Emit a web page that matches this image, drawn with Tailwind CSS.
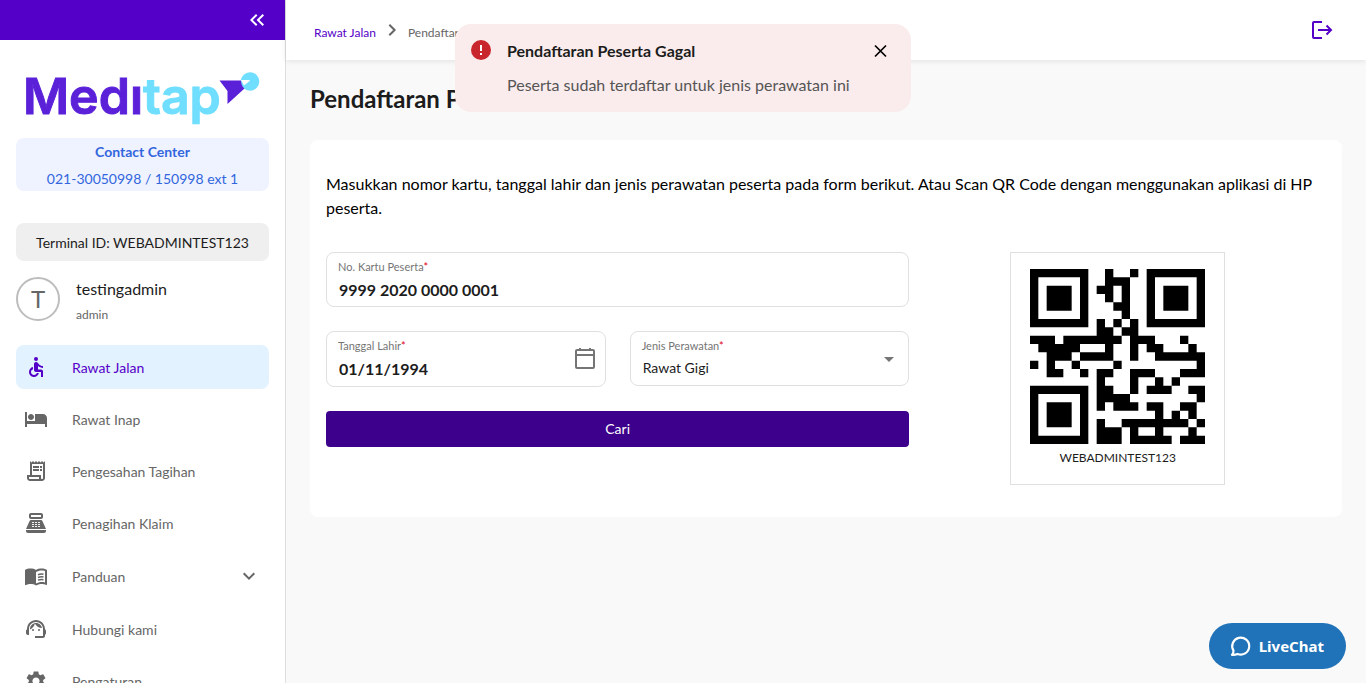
<!DOCTYPE html>
<html lang="id">
<head>
<meta charset="utf-8">
<meta name="viewport" content="width=device-width, initial-scale=1">
<title>Meditap - Pendaftaran Peserta</title>
<script src="https://cdn.jsdelivr.net/npm/@tailwindcss/browser@4"></script>
</head>
<body class="flex h-screen overflow-hidden bg-[#f9f9f9] font-['Lato',sans-serif] text-[#1c1c1c]">

<aside class="flex w-[286px] shrink-0 flex-col overflow-hidden border-r border-[#dedede] bg-white">
  <div class="flex h-10 shrink-0 items-center justify-end bg-[#5500c8] pr-4">
    <button type="button" aria-label="Tutup menu" class="text-white">
      <svg class="size-6" viewBox="0 0 24 24" fill="currentColor"><path d="M17.59 18 19 16.59 14.42 12 19 7.41 17.59 6l-6 6z"/><path d="m11 18 1.41-1.41L7.83 12l4.58-4.59L11 6l-6 6z"/></svg>
    </button>
  </div>

  <div class="flex flex-col px-4 pt-6">
    <svg class="h-[74px] w-full" viewBox="0 0 253 74" role="img" aria-label="Meditap">
      <text x="7" y="50" font-family="Inter, sans-serif" font-weight="600" font-size="50" fill="#5b21d9" stroke="#5b21d9">Medı<tspan fill="#70defe" stroke="#70defe">tap</tspan></text>
      <circle cx="234" cy="17.500" r="9.300" fill="#70defe"/>
      <path d="M203.500 16.500h21.500q0 5 3.500 8L211.500 40V27z" fill="#5b21d9"/>
      <path d="M225 16h8q2 .5 0 1.500l-5 4z" fill="#fff"/>
    </svg>

    <div class="flex flex-col items-center rounded-lg bg-[#eef3ff] pt-0.5 text-sm leading-6 text-[#3366dd]">
      <strong class="font-bold">Contact Center</strong>
      <span class="pt-[3px]">021-30050998 / 150998 ext 1</span>
    </div>

    <div class="mt-8 flex h-[38px] items-center justify-center rounded-lg bg-[#efefef] pt-0.5 text-sm">Terminal ID: WEBADMINTEST123</div>

    <div class="mt-4 flex gap-4">
      <div class="flex size-11 shrink-0 items-center justify-center rounded-full border-2 border-[#bdbdbd] text-2xl text-[#666]">T</div>
      <div class="flex flex-col">
        <span class="text-base leading-6">testingadmin</span>
        <span class="pt-1 text-xs leading-5 text-[#666]">admin</span>
      </div>
    </div>

    <nav class="mt-5 flex flex-col gap-2 text-sm text-[#666]" aria-label="Menu utama">
      <a href="#" aria-current="page" class="flex h-11 items-center gap-6 rounded-lg bg-[#e3f2ff] px-2 text-[#5500c8]">
        <svg class="size-6" viewBox="0 0 24 24" fill="currentColor"><circle cx="12" cy="4" r="2"/><path d="M19 13v-2c-1.540.020-3.090-.75-4.070-1.830l-1.290-1.430c-.17-.19-.38-.34-.61-.45-.01 0-.01-.01-.02-.01H13c-.35-.2-.75-.3-1.190-.26C10.760 7.110 10 8.040 10 9.090V15c0 1.100.9 2 2 2h5v5h2v-5.500c0-1.100-.9-2-2-2h-3v-3.450c1.290 1.070 3.250 1.940 5 1.950m-6.170 5c-.41 1.160-1.520 2-2.830 2-1.660 0-3-1.340-3-3 0-1.310.84-2.410 2-2.830V12.100c-2.280.46-4 2.480-4 4.900 0 2.760 2.240 5 5 5 2.420 0 4.440-1.720 4.900-4z"/></svg>
        <span class="pt-0.5">Rawat Jalan</span>
      </a>
      <a href="#" class="flex h-11 items-center gap-6 px-2">
        <svg class="size-6" viewBox="0 0 24 24" fill="currentColor"><path d="M7 13c1.660 0 3-1.340 3-3S8.660 7 7 7s-3 1.340-3 3 1.340 3 3 3m12-6h-8v7H3V5H1v15h2v-3h18v3h2v-9c0-2.210-1.790-4-4-4"/></svg>
        <span class="pt-0.5">Rawat Inap</span>
      </a>
      <a href="#" class="flex h-11 items-center gap-6 px-2">
        <svg class="size-6" viewBox="0 0 24 24" fill="currentColor"><path d="M19.500 3.500 18 2l-1.500 1.500L15 2l-1.500 1.500L12 2l-1.500 1.500L9 2 7.500 3.500 6 2v14H3v3c0 1.660 1.340 3 3 3h12c1.660 0 3-1.340 3-3V2zM15 20H6c-.55 0-1-.45-1-1v-1h10zm4-1c0 .55-.45 1-1 1s-1-.45-1-1v-3H8V5h11z"/><path d="M9 7h6v2H9zm7 0h2v2h-2zm-7 3h6v2H9zm7 0h2v2h-2z"/></svg>
        <span class="pt-0.5">Pengesahan Tagihan</span>
      </a>
      <a href="#" class="flex h-11 items-center gap-6 px-2">
        <svg class="size-6" viewBox="0 0 24 24" fill="currentColor"><path fill-rule="evenodd" d="M17 2H7c-1.100 0-2 .9-2 2v2c0 1.100.9 2 2 2h10c1.100 0 2-.9 2-2V4c0-1.100-.9-2-2-2m0 4H7V4h10z"/><path d="M20 22H4c-1.100 0-2-.9-2-2v-1h20v1c0 1.100-.9 2-2 2m-1.470-11.810C18.210 9.470 17.490 9 16.700 9H7.300c-.79 0-1.510.47-1.830 1.190L2 18h20z"/><path d="M8.500 11.500h1m2 0h1m2 0h1m-7 2h1m2 0h1m2 0h1m-7 2h1m2 0h1m2 0h1" stroke="#fff" stroke-linecap="round"/></svg>
        <span class="pt-0.5">Penagihan Klaim</span>
      </a>
      <button type="button" aria-expanded="false" class="flex h-[46px] items-center gap-6 px-2 text-left">
        <svg class="size-6" viewBox="0 0 24 24" fill="currentColor"><path d="M21 5c-1.110-.35-2.330-.5-3.500-.5-1.950 0-4.050.4-5.500 1.500-1.450-1.100-3.550-1.500-5.500-1.500S2.450 4.900 1 6v14.650c0 .25.25.5.5.5.1 0 .15-.05.25-.05C3.100 20.450 5.050 20 6.500 20c1.950 0 4.050.4 5.500 1.500 1.350-.85 3.800-1.500 5.500-1.500 1.650 0 3.350.3 4.750 1.050.1.050.15.050.25.050.25 0 .5-.25.5-.5V6c-.6-.45-1.250-.75-2-1m0 13.500c-1.100-.35-2.300-.5-3.500-.5-1.700 0-4.150.65-5.500 1.500V8c1.350-.85 3.800-1.500 5.500-1.500 1.200 0 2.400.15 3.500.5z"/><path d="M14 10.800c1.600-.7 3.700-.9 5.500-.5m-5.500 3.150c1.600-.7 3.700-.9 5.500-.5m-5.500 3.200c1.600-.7 3.700-.9 5.500-.5" fill="none" stroke="currentColor" stroke-width="1.500"/></svg>
        <span class="flex-1 pt-0.5">Panduan</span>
        <svg class="size-6" viewBox="0 0 24 24" fill="none" stroke="currentColor" stroke-width="2"><path d="m6.700 9.300 5.300 5.300 5.300-5.300"/></svg>
      </button>
      <a href="#" class="flex h-11 items-center gap-6 px-2">
        <svg class="size-6" viewBox="0 0 24 24" fill="currentColor"><path d="M21 12.220C21 6.730 16.740 3 12 3c-4.690 0-9 3.650-9 9.280-.6.34-1 .98-1 1.720v2c0 1.100.9 2 2 2h1v-6.100c0-3.870 3.130-7 7-7s7 3.130 7 7V19h-8v2h8c1.100 0 2-.9 2-2v-1.220c.59-.31 1-.92 1-1.640v-2.300c0-.7-.41-1.310-1-1.620"/><circle cx="9" cy="13" r="1"/><circle cx="15" cy="13" r="1"/><path d="M18 11.030C17.520 8.180 15.040 6 12.050 6c-3.030 0-6.290 2.510-6.030 6.450 2.470-1.010 4.330-3.210 4.860-5.890 1.310 2.630 4 4.440 7.120 4.470"/></svg>
        <span class="pt-0.5">Hubungi kami</span>
      </a>
      <a href="#" class="flex h-11 items-center gap-6 px-2">
        <svg class="size-6" viewBox="0 0 24 24" fill="currentColor"><path d="M19.140 12.940c.04-.3.060-.61.060-.94 0-.32-.02-.64-.07-.94l2.030-1.580c.18-.14.23-.41.12-.61l-1.920-3.320c-.12-.22-.37-.29-.59-.22l-2.390.96c-.5-.38-1.030-.7-1.620-.94l-.36-2.540c-.04-.24-.24-.41-.48-.41h-3.840c-.24 0-.43.17-.47.41l-.36 2.540c-.59.24-1.130.57-1.620.94l-2.390-.96c-.22-.08-.47 0-.59.22L2.740 8.870c-.12.21-.08.47.12.61l2.030 1.580c-.05.3-.09.63-.09.94s.020.64.070.94l-2.030 1.580c-.18.14-.23.41-.12.61l1.920 3.320c.12.22.37.29.59.22l2.390-.96c.5.38 1.030.7 1.620.94l.36 2.540c.05.24.24.41.48.41h3.840c.24 0 .44-.17.47-.41l.36-2.540c.59-.24 1.130-.56 1.620-.94l2.390.96c.22.08.47 0 .59-.22l1.920-3.320c.12-.22.070-.47-.12-.61zM12 15.600c-1.980 0-3.600-1.620-3.600-3.600s1.620-3.600 3.600-3.600 3.600 1.620 3.600 3.600-1.620 3.600-3.600 3.600"/></svg>
        <span class="pt-0.5">Pengaturan</span>
      </a>
    </nav>
  </div>
</aside>

<div class="flex min-w-0 flex-1 flex-col">
  <header class="z-10 flex h-[60px] shrink-0 items-center justify-between bg-white pr-8 pl-7 shadow-[0_1px_6px_rgba(0,0,0,0.1)]">
    <nav aria-label="Breadcrumb" class="flex items-center gap-1 text-xs">
      <a href="#" class="pt-[5px] text-[#5500c8]">Rawat Jalan</a>
      <svg class="size-6 text-[#666]" viewBox="0 0 24 24" fill="none" stroke="currentColor" stroke-width="2"><path d="m9.300 6.700 5.300 5.300-5.300 5.300"/></svg>
      <span class="pt-[5px] text-[#666]">Pendaftaran Peserta</span>
    </nav>
    <button type="button" aria-label="Keluar" class="text-[#5500c8]">
      <svg class="size-6" viewBox="0 0 24 24" fill="none" stroke="currentColor" stroke-width="2"><path d="M12 4H4q-1 0-1 1v14q0 1 1 1h8M8 12h13M16.500 7.500 21 12l-4.500 4.500"/></svg>
    </button>
  </header>

  <main class="flex flex-col gap-[26px] px-6 pt-[23px] pb-6">
    <h1 class="text-2xl leading-[31px] font-bold">Pendaftaran Peserta</h1>

    <section class="flex flex-col gap-8 rounded-lg bg-white px-4 py-8">
      <p class="text-base text-black">Masukkan nomor kartu, tanggal lahir dan jenis perawatan peserta pada form berikut. Atau Scan QR Code dengan menggunakan aplikasi di HP peserta.</p>

      <div class="grid grid-cols-12">
        <form class="col-span-7 grid grid-cols-2 content-start items-start gap-6">
          <div class="col-span-2 flex h-[55px] flex-col rounded-lg border border-[#e0e0e0] px-[11px] pt-1.5">
            <label for="kartu" class="text-[11px] leading-4 text-[#757575]">No. Kartu Peserta<span class="text-[#e0001a]">*</span></label>
            <input id="kartu" type="text" value="9999 2020 0000 0001" class="h-7 w-full bg-transparent pl-px text-base font-bold outline-none">
          </div>
          <div class="flex h-14 items-start rounded-lg border border-[#e0e0e0] pt-1.5 pr-2 pl-[11px]">
            <div class="flex min-w-0 flex-1 flex-col">
              <label for="lahir" class="text-[11px] leading-4 text-[#757575]">Tanggal Lahir<span class="text-[#e0001a]">*</span></label>
              <input id="lahir" type="text" value="01/11/1994" class="h-7 w-full bg-transparent pl-px text-base font-bold outline-none">
            </div>
            <button type="button" aria-label="Pilih tanggal" class="mt-2 text-[#757575]">
              <svg class="size-6" viewBox="0 0 24 24" fill="none" stroke="currentColor" stroke-width="2"><rect x="3" y="4" width="18" height="18" rx="1"/><path d="M3 9h18M7 2v3M17 2v3"/></svg>
            </button>
          </div>
          <div class="relative flex h-[55px] flex-col rounded-lg border border-[#e0e0e0] px-[11px] pt-1.5">
            <label for="jenis" class="text-[11px] leading-4 text-[#757575]">Jenis Perawatan<span class="text-[#e0001a]">*</span></label>
            <select id="jenis" class="h-7 w-full appearance-none bg-transparent pl-px text-sm outline-none"><option>Rawat Gigi</option></select>
            <svg class="pointer-events-none absolute top-[15px] right-[7px] size-6 text-[#757575]" viewBox="0 0 24 24" fill="currentColor"><path d="m7 10 5 5 5-5z"/></svg>
          </div>
          <button type="submit" class="col-span-2 h-9 rounded bg-[#3c008c] text-sm text-white">Cari</button>
        </form>

        <div class="col-span-5 flex justify-center">
          <figure class="flex flex-col items-center border border-[#e0e0e0] px-[19px] pt-4 pb-3.5">
            <svg class="size-[175px]" viewBox="0 0 21 21" role="img" aria-label="Kode QR terminal">
              <path fill="#000" fill-rule="evenodd" d="M0 0h7v7H0zM1 1v5h5V1zM2 2h3v3H2zM14 0h7v7h-7zM15 1v5h5V1zM16 2h3v3h-3zM0 14h7v7H0zM1 15v5h5v-5zM2 16h3v3H2z"/>
              <path stroke="#000" stroke-width="1" fill="none" d="M9 .5h1m2 0h1M9 1.500h3M8 2.500h2m1 0h1M9 3.500h1m1 0h1M10 4.500h2M11 5.500h1M8 6.500h1m1 0h1m1 0h1M8 7.500h2m1 0h2M0 8.500h3m1 0h7m1 0h3m3 0h1M1 9.500h5m3 0h1m2 0h1m1 0h2m3 0h1M2 10.500h3m1 0h4m2 0h1m2 0h6M0 11.500h1m1 0h1m2 0h1m4 0h1m9 0h1M2 12.500h2m2 0h1m1 0h2m2 0h3m3 0h3M8 13.500h1m3 0h1m2 0h1m1 0h1M8 14.500h2m2 0h1m1 0h3m2 0h2M8 15.500h4m8 0h1M8 16.500h1m1 0h3m1 0h2m2 0h2M15 17.500h1m1 0h1m1 0h1M8 18.500h1m2 0h8m1 0h1M8 19.500h3m1 0h1m2 0h1m3 0h1M8 20.500h3m1 0h5m1 0h3"/>
            </svg>
            <figcaption class="pt-0.5 text-xs leading-6">WEBADMINTEST123</figcaption>
          </figure>
        </div>
      </div>
    </section>
  </main>
</div>

<div role="alert" class="fixed top-6 left-1/2 z-20 flex w-[456px] -translate-x-1/2 gap-[14px] rounded-2xl bg-[#faecec] px-[14px] pt-[14px] pb-[15px]">
  <svg class="size-6 shrink-0" viewBox="0 0 24 24"><circle cx="12" cy="12" r="10" fill="#c9252d"/><path d="M11 7h2v6h-2zM11 15h2v2h-2z" fill="#fff"/></svg>
  <div class="flex flex-1 flex-col gap-[10px] text-base leading-6">
    <strong class="pt-px font-bold">Pendaftaran Peserta Gagal</strong>
    <span class="text-[#555]">Peserta sudah terdaftar untuk jenis perawatan ini</span>
  </div>
  <button type="button" aria-label="Tutup" class="mr-1 size-6 text-black">
    <svg class="size-6" viewBox="0 0 24 24" fill="none" stroke="currentColor" stroke-width="1.700"><path d="m6 7.500 11 11M17 7.500 6 18.500"/></svg>
  </button>
</div>

<button type="button" class="fixed right-5 bottom-[14px] z-20 flex h-[46px] items-center gap-1.5 rounded-full bg-[#2073b8] pr-[22px] pl-5 font-['Noto_Sans',sans-serif] text-[15px] font-bold text-white">
  <svg class="size-6" viewBox="0 0 24 24" fill="none" stroke="currentColor" stroke-width="2.200" stroke-linejoin="round" stroke-linecap="round"><path d="M4.500 16.600A8.500 8.500 0 1 1 8.500 20q-2.500 1-5.500.8 1.600-1.600 1.500-4.200z"/></svg>
  <span>LiveChat</span>
</button>
</body>
</html>
